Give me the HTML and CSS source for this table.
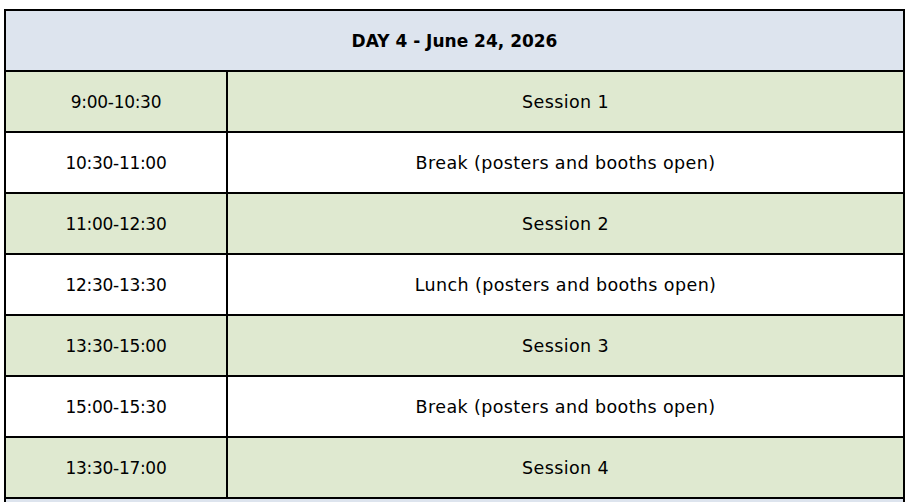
FILE: index.html
```html
<!DOCTYPE html>
<html>
<head>
<meta charset="utf-8">
<link rel="stylesheet" href="styles.css">
</head>
<body>
<div class="schedule">
  <div class="cell head">DAY 4 - June 24, 2026</div>
  <div class="cell time green">9:00-10:30</div><div class="cell desc green">Session 1</div>
  <div class="cell time">10:30-11:00</div><div class="cell desc">Break (posters and booths open)</div>
  <div class="cell time green">11:00-12:30</div><div class="cell desc green">Session 2</div>
  <div class="cell time">12:30-13:30</div><div class="cell desc">Lunch (posters and booths open)</div>
  <div class="cell time green">13:30-15:00</div><div class="cell desc green">Session 3</div>
  <div class="cell time">15:00-15:30</div><div class="cell desc">Break (posters and booths open)</div>
  <div class="cell time green">13:30-17:00</div><div class="cell desc green">Session 4</div>
  <div class="cell head"></div>
</div>
</body>
</html>
```

FILE: styles.css
```css
html, body {
  margin: 0;
  padding: 0;
  background: #ffffff;
}
body {
  padding: 9px 0 0 4px;
  font-family: "DejaVu Sans", sans-serif;
}
.schedule {
  width: 901px;
  box-sizing: border-box;
  display: grid;
  grid-template-columns: 220px 675px;
  grid-auto-rows: 59px;
  gap: 2px;
  padding: 2px;
  background: #000;
}
.cell {
  background: #ffffff;
  display: flex;
  align-items: center;
  justify-content: center;
  color: #000;
}
.time {
  font-size: 17px;
  letter-spacing: -0.3px;
}
.desc {
  font-size: 17.5px;
  letter-spacing: 0.4px;
}
.green {
  background: #dfe9d0;
}
.head {
  grid-column: 1 / 3;
  background: #dde4ee;
  font-weight: bold;
  font-size: 17px;
}
```
